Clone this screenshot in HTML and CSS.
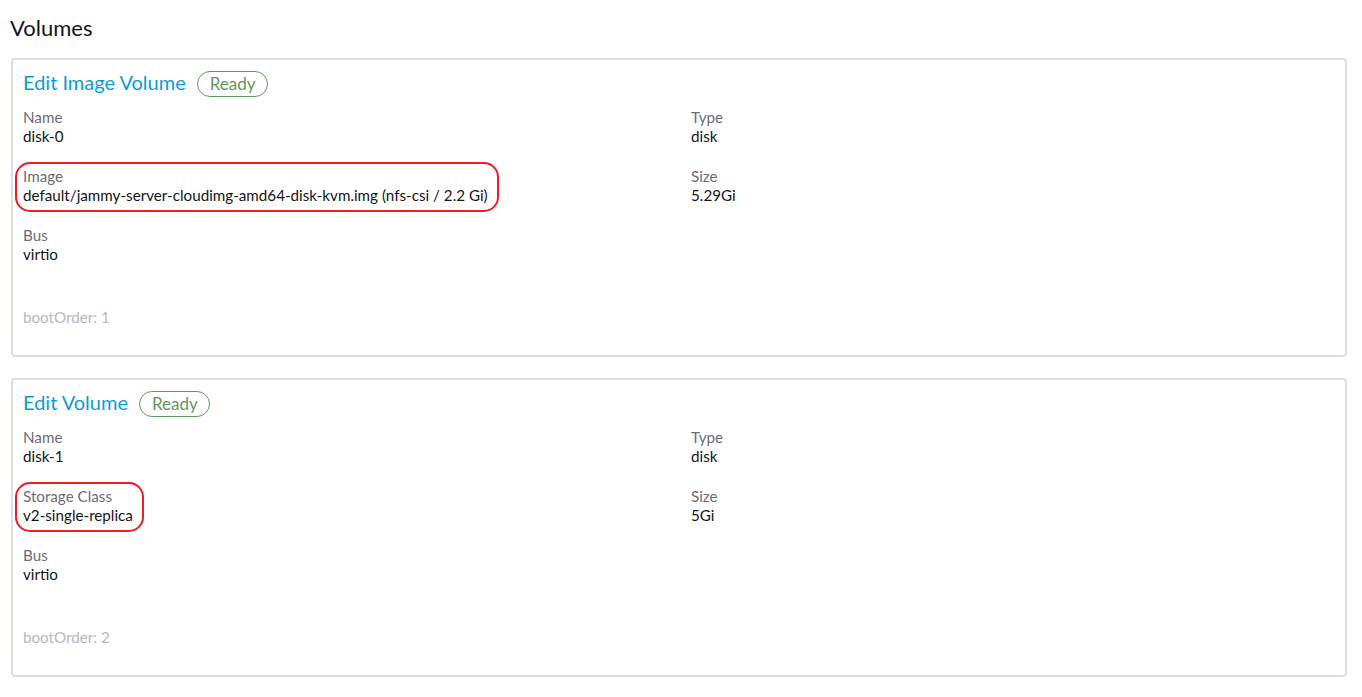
FILE: index.html
```html
<!DOCTYPE html>
<html lang="en">
<head>
    <meta charset="UTF-8">
    <title>Volumes</title>
    <link rel="stylesheet" href="styles.css">
</head>
<body>
    <div class="page">
        <h2 class="page-title">Volumes</h2>

        <div class="volume">
            <div class="volume-head">
                <a class="volume-title">Edit Image Volume</a>
                <span class="badge">Ready</span>
            </div>
            <div class="volume-body">
                <div class="col">
                    <div class="field">
                        <div class="label">Name</div>
                        <div class="value">disk-0</div>
                    </div>
                    <div class="field marked">
                        <div class="label">Image</div>
                        <div class="value">default/jammy-server-cloudimg-amd64-disk-kvm.img (nfs-csi / 2.2 Gi)</div>
                    </div>
                    <div class="field">
                        <div class="label">Bus</div>
                        <div class="value">virtio</div>
                    </div>
                </div>
                <div class="col">
                    <div class="field">
                        <div class="label">Type</div>
                        <div class="value">disk</div>
                    </div>
                    <div class="field">
                        <div class="label">Size</div>
                        <div class="value">5.29Gi</div>
                    </div>
                </div>
            </div>
            <div class="boot-order">bootOrder: 1</div>
        </div>

        <div class="volume">
            <div class="volume-head">
                <a class="volume-title">Edit Volume</a>
                <span class="badge">Ready</span>
            </div>
            <div class="volume-body">
                <div class="col">
                    <div class="field">
                        <div class="label">Name</div>
                        <div class="value">disk-1</div>
                    </div>
                    <div class="field marked">
                        <div class="label">Storage Class</div>
                        <div class="value">v2-single-replica</div>
                    </div>
                    <div class="field">
                        <div class="label">Bus</div>
                        <div class="value">virtio</div>
                    </div>
                </div>
                <div class="col">
                    <div class="field">
                        <div class="label">Type</div>
                        <div class="value">disk</div>
                    </div>
                    <div class="field">
                        <div class="label">Size</div>
                        <div class="value">5Gi</div>
                    </div>
                </div>
            </div>
            <div class="boot-order">bootOrder: 2</div>
        </div>
    </div>
    <div class="footer-shade"></div>
</body>
</html>
```

FILE: styles.css
```css
body {
    font-family: Lato, "Open Sans", sans-serif;
    margin: 0;
    padding: 0;
    background: #fff;
    color: #141419;
}
.page {
    padding: 0 15px 8px 11px;
}
.page-title {
    font-size: 22px;
    font-weight: 400;
    line-height: 28px;
    margin: 0;
    padding: 14px 0 16px 0;
    margin-left: -1px;
}
.volume {
    border: 2px solid #dcdee7;
    border-radius: 4px;
    padding: 10px 10px 28px 10px;
    margin-bottom: 21px;
}
.volume-head {
    display: flex;
    align-items: center;
    gap: 11px;
    height: 27px;
}
.volume-title {
    color: #0b9cd6;
    font-size: 20px;
    line-height: 26px;
    padding-bottom: 3px;
    cursor: pointer;
}
.badge {
    color: #5d995d;
    border: 1px solid #5d995d;
    border-radius: 14px;
    font-size: 17px;
    line-height: 24px;
    padding: 0 11px 0 12px;
}
.volume-body {
    display: grid;
    grid-template-columns: 1fr 1fr;
    column-gap: 24px;
    padding-top: 11px;
}
.field {
    position: relative;
    width: fit-content;
    margin-bottom: 21px;
}
.label {
    color: #6c6c76;
    font-size: 15.2px;
    line-height: 19px;
}
.value {
    font-size: 15.2px;
    line-height: 19px;
}
.marked::after {
    content: "";
    position: absolute;
    top: -5px;
    bottom: -7px;
    left: -8px;
    right: -11px;
    border: 2px solid #ee1c25;
    border-radius: 15px;
}
.boot-order {
    color: #b6b6c2;
    font-size: 15.2px;
    line-height: 19px;
    padding-top: 23px;
}
.footer-shade {
    height: 14px;
    background: linear-gradient(to right, #f6f6f6 0%, #f8f8f8 60%, #fff 88%);
}
```
